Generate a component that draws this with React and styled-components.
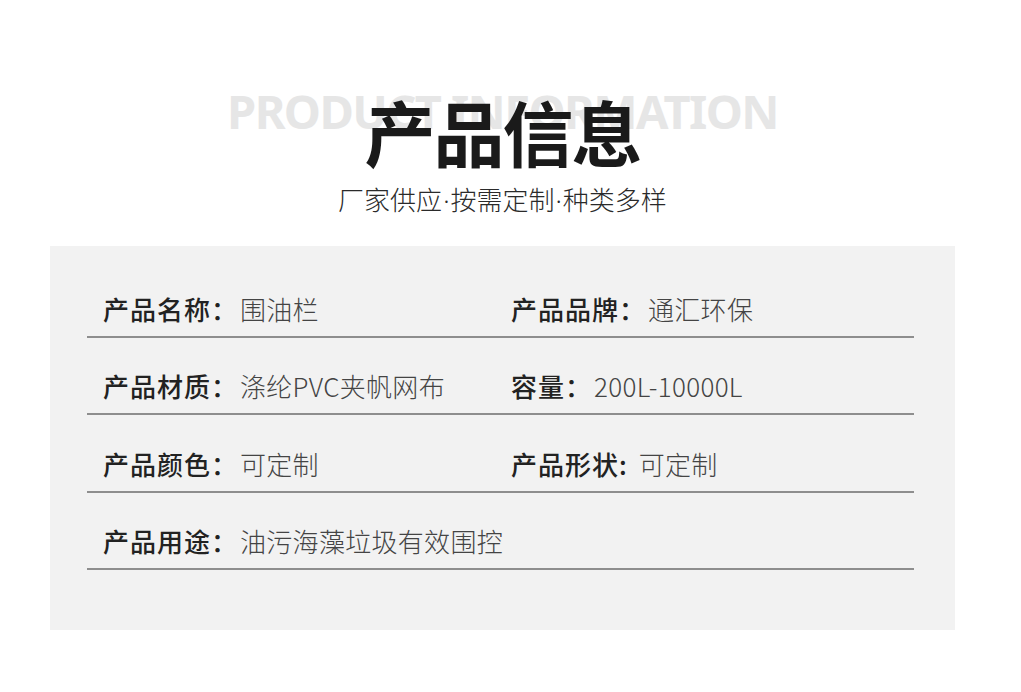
import React from "react";
import styled, { createGlobalStyle } from "styled-components";

const GlobalStyle = createGlobalStyle`
  body {
    margin: 0;
    background: #ffffff;
    font-family: "Noto Sans CJK SC", "Noto Sans", sans-serif;
  }
`;

const specs = [
  [
    { label: "产品名称：", value: "围油栏" },
    { label: "产品品牌：", value: "通汇环保" },
  ],
  [
    { label: "产品材质：", value: "涤纶PVC夹帆网布" },
    { label: "容量：", value: "200L-10000L" },
  ],
  [
    { label: "产品颜色：", value: "可定制" },
    { label: "产品形状:", value: "可定制", tight: true },
  ],
  [{ label: "产品用途：", value: "油污海藻垃圾有效围控" }],
];

const App = () => {
  return (
    <Page>
      <GlobalStyle />
      <Header>
        <Watermark>PRODUCT INFORMATION</Watermark>
        <Title>产品信息</Title>
        <Subtitle>
          厂家供应<Dot>·</Dot>按需定制<Dot>·</Dot>种类多样
        </Subtitle>
      </Header>
      <Panel>
        {specs.map((row, i) => (
          <Row key={i}>
            {row.map((item) => (
              <Cell key={item.label}>
                <Label>{item.label}</Label>
                <Value tight={item.tight ? 1 : 0}>{item.value}</Value>
              </Cell>
            ))}
          </Row>
        ))}
      </Panel>
    </Page>
  );
};

export default App;

const Page = styled.div`
  width: 1021px;
  height: 692px;
  overflow: hidden;
`;

const Header = styled.div`
  position: relative;
  display: flex;
  flex-direction: column;
  align-items: center;
  width: 1005px;
  padding-top: 90px;
`;

const Watermark = styled.div`
  position: absolute;
  top: 81px;
  left: 0;
  right: 0;
  text-align: center;
  font-family: "Noto Sans", "Open Sans", sans-serif;
  font-weight: 700;
  font-size: 47px;
  line-height: 60px;
  letter-spacing: -1.6px;
  color: #e6e6e6;
  white-space: nowrap;
`;

const Title = styled.h1`
  position: relative;
  margin: 0;
  font-family: "Noto Sans CJK SC", sans-serif;
  font-weight: 700;
  font-size: 71px;
  line-height: 80px;
  letter-spacing: -2px;
  color: #1a1a1a;
`;

const Subtitle = styled.div`
  margin-top: 12px;
  font-family: "Noto Sans CJK SC", sans-serif;
  font-weight: 300;
  font-size: 26px;
  line-height: 34px;
  color: #2a2a2a;
`;

const Dot = styled.span`
  font-family: "Noto Sans", sans-serif;
  margin: 0 1px;
`;

const Panel = styled.div`
  box-sizing: border-box;
  width: 905px;
  height: 384px;
  margin: 29px 0 0 50px;
  padding: 14px 41px 0 37px;
  background: #f2f2f2;
`;

const Row = styled.div`
  display: grid;
  grid-template-columns: 408px 1fr;
  align-items: end;
  box-sizing: border-box;
  height: 77.5px;
  padding: 0 0 11px 16px;
  border-bottom: 2px solid #8e8e8e;
`;

const Cell = styled.div`
  display: flex;
  align-items: baseline;
  white-space: nowrap;
`;

const Label = styled.span`
  font-weight: 500;
  font-size: 26px;
  line-height: 32px;
  color: #222222;
  letter-spacing: 1px;
`;

const Value = styled.span`
  margin-left: ${(p) => (p.tight ? "11px" : "2px")};
  font-weight: 300;
  font-size: 26px;
  line-height: 32px;
  color: #444444;
  letter-spacing: 0.3px;
`;
